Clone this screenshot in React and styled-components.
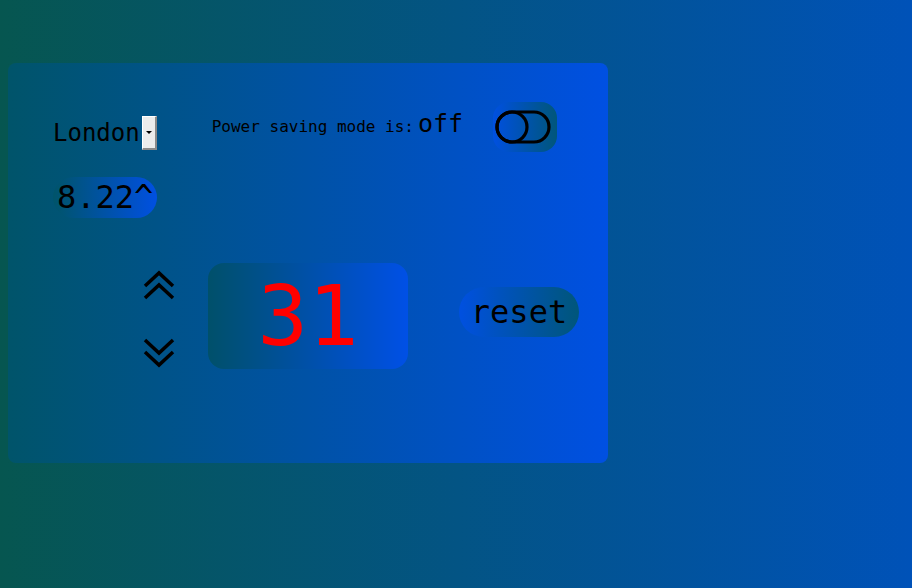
import React from 'react';
import styled, { createGlobalStyle } from 'styled-components';

const GlobalStyle = createGlobalStyle`
  html {
    background: linear-gradient(to right, #065650, #0052b8);
    min-height: 100%;
  }
  body {
    margin: 8px;
    font-family: "DejaVu Sans Mono", monospace;
    color: #000;
  }
`;

const Card = styled.div`
  margin-top: 55px;
  width: 600px;
  height: 400px;
  box-sizing: border-box;
  padding: 39px 0 0 45px;
  border-radius: 8px;
  background: linear-gradient(to right, #00546a, #0050e2);
  display: flex;
  flex-direction: column;
`;

const TopRow = styled.div`
  display: flex;
  align-items: center;
  height: 50px;
`;

const CitySelect = styled.div`
  display: flex;
  align-items: center;
  margin-top: 12px;
  font-size: 24px;
  gap: 2px;
`;

const DropButton = styled.div`
  width: 15px;
  height: 34px;
  box-sizing: border-box;
  background: #ececec;
  border-top: 1px solid #fff;
  border-left: 1px solid #fff;
  border-right: 2px solid #8a8a8a;
  border-bottom: 2px solid #8a8a8a;
  display: flex;
  align-items: center;
  justify-content: center;
  &::after {
    content: '';
    border-left: 3px solid transparent;
    border-right: 3px solid transparent;
    border-top: 3px solid #000;
  }
`;

const Status = styled.div`
  display: flex;
  align-items: baseline;
  gap: 4px;
  margin-left: 55px;
  margin-top: -8px;
`;

const StatusLabel = styled.span`
  font-size: 16px;
`;

const StatusValue = styled.span`
  font-size: 25px;
`;

const ToggleButton = styled.div`
  margin-left: 30px;
  width: 64px;
  height: 50px;
  border-radius: 16px;
  background: linear-gradient(to right, #0050e0, #00567a);
  display: flex;
  align-items: center;
  padding-left: 2px;
  box-sizing: border-box;
`;

const Temp = styled.div`
  margin-top: 25px;
  align-self: flex-start;
  height: 41px;
  border-radius: 21px;
  padding: 0 4px 0 4px;
  font-size: 32px;
  line-height: 41px;
  background: linear-gradient(to right, #00546a, #0050e2);
`;

const Controls = styled.div`
  display: flex;
  align-items: center;
  margin-top: 45px;
  margin-left: 90px;
`;

const Arrows = styled.div`
  display: flex;
  flex-direction: column;
  gap: 34px;
  width: 32px;
  margin-top: 6px;
`;

const Counter = styled.div`
  margin-left: 33px;
  width: 200px;
  height: 106px;
  border-radius: 16px;
  background: linear-gradient(to right, #00506a, #0050e6);
  color: #ff0000;
  font-size: 84px;
  display: flex;
  align-items: center;
  justify-content: center;
`;

const ResetButton = styled.div`
  margin-left: 51px;
  margin-top: -8px;
  width: 120px;
  height: 50px;
  border-radius: 25px;
  background: linear-gradient(to right, #0050e0, #00567a);
  font-size: 32px;
  display: flex;
  align-items: center;
  justify-content: center;
`;

const Chevrons = ({ down }) => (
  <svg width="32" height="32" viewBox="0 0 32 32" fill="none" stroke="#000" strokeWidth="3.5"
       style={down ? { transform: 'scaleY(-1)' } : undefined}>
    <polyline points="2,16 16,3 30,16" />
    <polyline points="2,28 16,15 30,28" />
  </svg>
);

const ToggleIcon = () => (
  <svg width="56" height="34" viewBox="0 0 56 34" fill="none" stroke="#000" strokeWidth="3.2">
    <rect x="2" y="2" width="52" height="30" rx="15" />
    <circle cx="17" cy="17" r="15" />
  </svg>
);

export default function App() {
  return (
    <>
      <GlobalStyle />
      <Card>
        <TopRow>
          <CitySelect>
            London
            <DropButton />
          </CitySelect>
          <Status>
            <StatusLabel>Power saving mode is:</StatusLabel>
            <StatusValue>off</StatusValue>
          </Status>
          <ToggleButton>
            <ToggleIcon />
          </ToggleButton>
        </TopRow>
        <Temp>8.22^</Temp>
        <Controls>
          <Arrows>
            <Chevrons />
            <Chevrons down />
          </Arrows>
          <Counter>31</Counter>
          <ResetButton>reset</ResetButton>
        </Controls>
      </Card>
    </>
  );
}
